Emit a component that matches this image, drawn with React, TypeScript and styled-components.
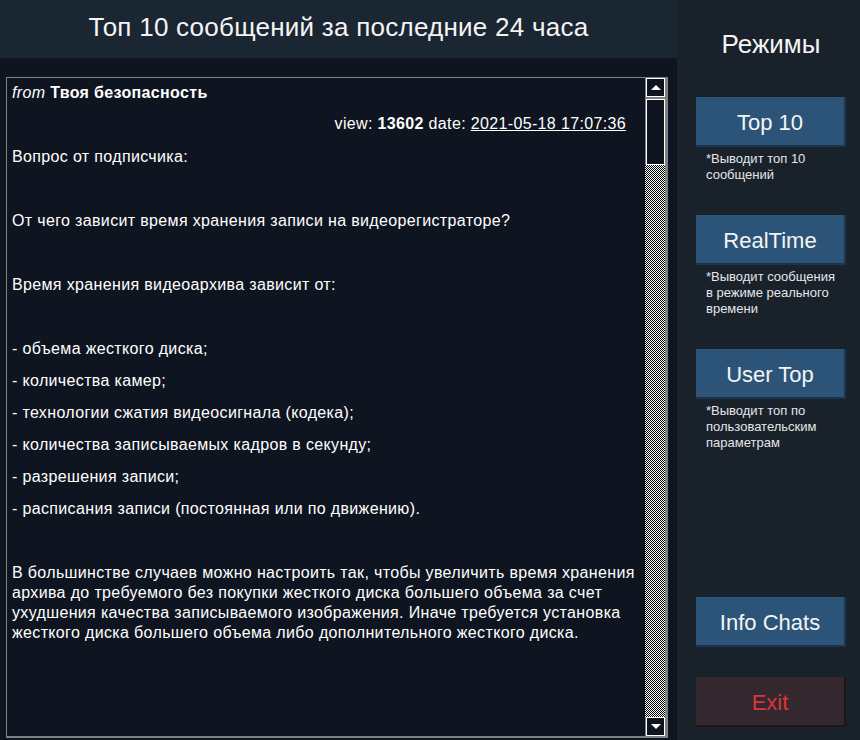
import React from "react";
import styled, { createGlobalStyle } from "styled-components";

const GlobalStyle = createGlobalStyle`
  html, body {
    margin: 0;
    padding: 0;
    height: 100%;
    background: #0f1520;
  }
  body {
    font-family: "Liberation Sans", Arial, sans-serif;
    color: #ffffff;
  }
  #root {
    height: 100%;
  }
`;

const modes = [
  { title: "Top 10", note: "*Выводит топ 10 сообщений" },
  { title: "RealTime", note: "*Выводит сообщения в режиме реального времени" },
  { title: "User Top", note: "*Выводит топ по пользовательским параметрам" },
];

const listItems = [
  "- объема жесткого диска;",
  "- количества камер;",
  "- технологии сжатия видеосигнала (кодека);",
  "- количества записываемых кадров в секунду;",
  "- разрешения записи;",
  "- расписания записи (постоянная или по движению).",
];

const App = () => {
  return (
    <>
      <GlobalStyle />
      <Page>
        <Main>
          <Header>
            <Title>Топ 10 сообщений за последние 24 часа</Title>
          </Header>
          <Feed>
            <MessageBox>
              <Content>
                <FromRow>
                  <em>from</em> <b>Твоя безопасность</b>
                </FromRow>
                <MetaRow>
                  view: <b>13602</b> date: <DateLink>2021-05-18 17:07:36</DateLink>
                </MetaRow>
                <Para>Вопрос от подписчика:</Para>
                <Para />
                <Para>От чего зависит время хранения записи на видеорегистраторе?</Para>
                <Para />
                <Para>Время хранения видеоархива зависит от:</Para>
                <Para />
                {listItems.map((item) => (
                  <Para key={item}>{item}</Para>
                ))}
                <Para />
                <Para>
                  В большинстве случаев можно настроить так, чтобы увеличить время хранения
                  архива до требуемого без покупки жесткого диска большего объема за счет
                  ухудшения качества записываемого изображения. Иначе требуется установка
                  жесткого диска большего объема либо дополнительного жесткого диска.
                </Para>
              </Content>
              <ScrollBar>
                <ArrowButton>
                  <Arrow $dir="up" />
                </ArrowButton>
                <Thumb />
                <Track />
                <ArrowButton>
                  <Arrow $dir="down" />
                </ArrowButton>
              </ScrollBar>
            </MessageBox>
          </Feed>
        </Main>

        <Sidebar>
          <SideTitle>Режимы</SideTitle>
          <ModeList>
            {modes.map((mode) => (
              <Mode key={mode.title}>
                <ModeButton>{mode.title}</ModeButton>
                <Note>{mode.note}</Note>
              </Mode>
            ))}
          </ModeList>
          <BottomButtons>
            <ModeButton>Info Chats</ModeButton>
            <ModeButton $danger>Exit</ModeButton>
          </BottomButtons>
        </Sidebar>
      </Page>
    </>
  );
};

const Page = styled.div`
  display: flex;
  width: 860px;
  height: 740px;
  overflow: hidden;
`;

const Main = styled.div`
  width: 677px;
  display: flex;
  flex-direction: column;
  background: #0f1520;
`;

const Header = styled.div`
  height: 58px;
  box-sizing: border-box;
  padding-bottom: 4px;
  background: #1b2633;
  display: flex;
  align-items: center;
  justify-content: center;
`;

const Title = styled.h1`
  margin: 0;
  font-size: 26px;
  letter-spacing: 0.25px;
  font-weight: normal;
  color: #f4f4f4;
`;

const Feed = styled.div`
  flex: 1;
  display: flex;
  padding: 19px 9px 2px 6px;
  min-height: 0;
`;

const MessageBox = styled.div`
  flex: 1;
  display: flex;
  border: 1px solid #808080;
  border-right-width: 3px;
  border-bottom-width: 2px;
  min-height: 0;
`;

const Content = styled.div`
  flex: 1;
  overflow: hidden;
  padding: 5px 5px 0 5px;
  font-size: 16px;
  line-height: 20px;
  letter-spacing: 0.35px;
`;

const FromRow = styled.div`
  margin-bottom: 11px;
`;

const MetaRow = styled.div`
  text-align: right;
  padding-right: 14px;
  margin-bottom: 13px;
`;

const DateLink = styled.span`
  text-decoration: underline;
`;

const Para = styled.p`
  margin: 0 0 12px;
  min-height: 20px;
`;

const ScrollBar = styled.div`
  width: 20px;
  display: flex;
  flex-direction: column;
  background: #808080;
`;

const ArrowButton = styled.div`
  height: 19px;
  box-sizing: border-box;
  margin-left: 1px;
  border: 1px solid #ffffff;
  background: #0f1520;
  display: flex;
  align-items: center;
  justify-content: center;
`;

const Arrow = styled.div<{ $dir: "up" | "down" }>`
  width: 0;
  height: 0;
  border-left: 5px solid transparent;
  border-right: 5px solid transparent;
  ${({ $dir }) =>
    $dir === "up" ? "border-bottom: 5px solid #fff;" : "border-top: 5px solid #fff;"}
`;

const Thumb = styled.div`
  height: 66px;
  box-sizing: border-box;
  margin: 2px 0 0 1px;
  border: 1px solid #ffffff;
  background: #0f1520;
`;

const Track = styled.div`
  flex: 1;
  background: repeating-conic-gradient(#ffffff 0 25%, #000000 0 50%) 0 0 / 2px 2px;
`;

const Sidebar = styled.div`
  flex: 1;
  background: #19212b;
  display: flex;
  flex-direction: column;
  padding: 0 14px 13px 19px;
`;

const SideTitle = styled.h2`
  margin: 28px 0 0;
  font-size: 26px;
  line-height: 32px;
  font-weight: normal;
  text-align: center;
  color: #f4f4f4;
`;

const ModeList = styled.div`
  margin-top: 37px;
  display: flex;
  flex-direction: column;
  gap: 32px;
`;

const Mode = styled.div`
  display: flex;
  flex-direction: column;
`;

const ModeButton = styled.div<{ $danger?: boolean }>`
  width: 150px;
  height: 50px;
  box-sizing: border-box;
  padding-top: 3px;
  display: flex;
  align-items: center;
  justify-content: center;
  font-size: 22px;
  background: ${({ $danger }) => ($danger ? "#35272e" : "#2c5479")};
  color: ${({ $danger }) => ($danger ? "#d9363c" : "#f4f4f4")};
  border-right: 2px solid ${({ $danger }) => ($danger ? "#1d1519" : "#1b3550")};
  border-bottom: 2px solid ${({ $danger }) => ($danger ? "#1d1519" : "#1b3550")};
  cursor: pointer;
`;

const Note = styled.div`
  margin-top: 4px;
  padding-left: 10px;
  width: 136px;
  font-size: 13px;
  line-height: 16px;
  color: #e6e6e6;
`;

const BottomButtons = styled.div`
  margin-top: auto;
  display: flex;
  flex-direction: column;
  gap: 30px;
`;

export default App;
